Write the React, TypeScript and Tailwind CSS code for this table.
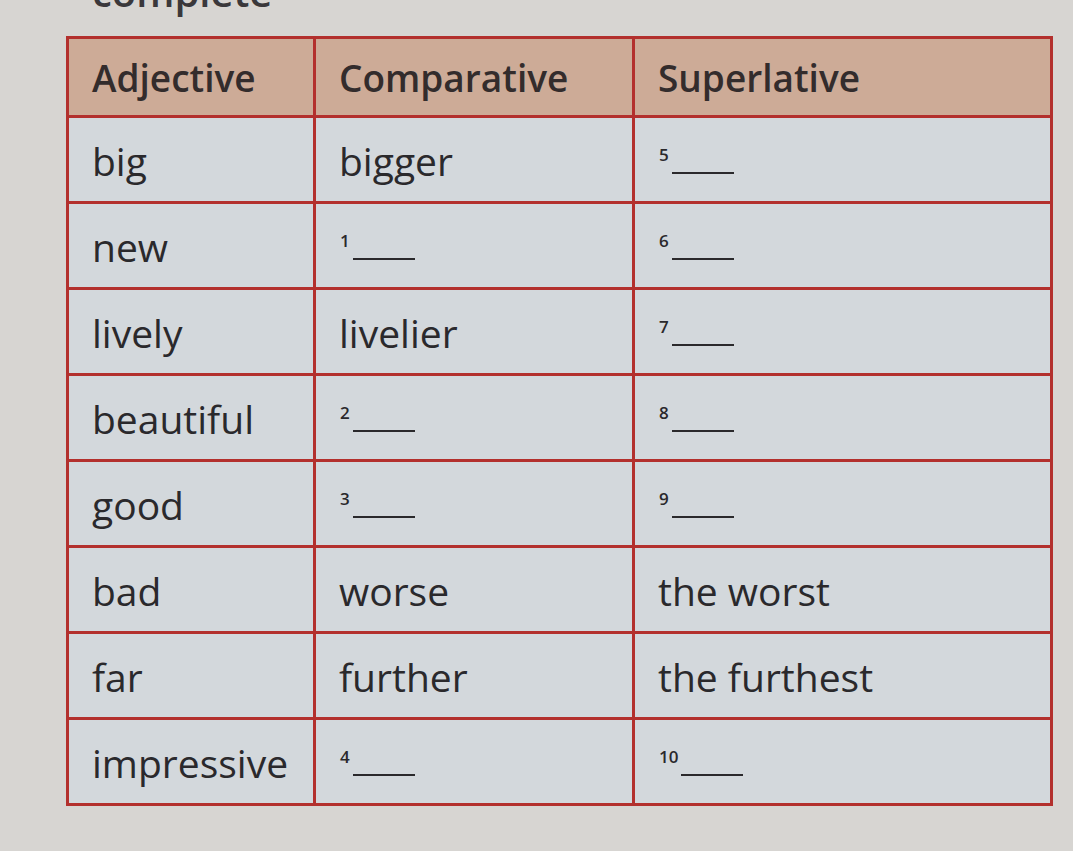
import React from "react";

type Cell = { text?: string; num?: string };

const rows: Cell[][] = [
  [{ text: "big" }, { text: "bigger" }, { num: "5" }],
  [{ text: "new" }, { num: "1" }, { num: "6" }],
  [{ text: "lively" }, { text: "livelier" }, { num: "7" }],
  [{ text: "beautiful" }, { num: "2" }, { num: "8" }],
  [{ text: "good" }, { num: "3" }, { num: "9" }],
  [{ text: "bad" }, { text: "worse" }, { text: "the worst" }],
  [{ text: "far" }, { text: "further" }, { text: "the furthest" }],
  [{ text: "impressive" }, { num: "4" }, { num: "10" }],
];

function BodyCell({ c }: { c: Cell }) {
  if (c.text) {
    return (
      <div className="bg-[#d3d8dc] h-[83px] flex items-center pl-[23px] pt-[2px] text-[39px] text-[#2a292c] leading-none">
        {c.text}
      </div>
    );
  }
  return (
    <div className="bg-[#d3d8dc] h-[83px] flex items-start pl-[24px] pt-[28px] text-[#2a292c]">
      <span className="text-[17px] font-semibold leading-none">{c.num}</span>
      <span className="ml-[3px] mt-[26px] w-[62px] border-b-2 border-[#2a292c]"></span>
    </div>
  );
}

export default function App() {
  const headers = ["Adjective", "Comparative", "Superlative"];
  return (
    <div
      className="w-[1073px] h-[851px] overflow-hidden bg-[#d7d5d2] relative"
      style={{ fontFamily: '"Open Sans", "Noto Sans", sans-serif' }}
    >
      <div className="absolute left-[92px] top-[-28px] text-[40px] font-semibold text-[#3a383b] leading-none">
        complete
      </div>
      <div className="pt-[36px] pl-[66px]">
        <div className="inline-grid grid-cols-[244px_316px_415px] gap-[3px] p-[3px] bg-[#b3302d]">
          {headers.map((h) => (
            <div
              key={h}
              className="bg-[#cdab97] h-[76px] flex items-center pl-[23px] text-[37px] font-semibold text-[#332c2c] leading-none"
            >
              {h}
            </div>
          ))}
          {rows.map((r, i) => r.map((c, j) => <BodyCell key={i + "-" + j} c={c} />))}
        </div>
      </div>
    </div>
  );
}
